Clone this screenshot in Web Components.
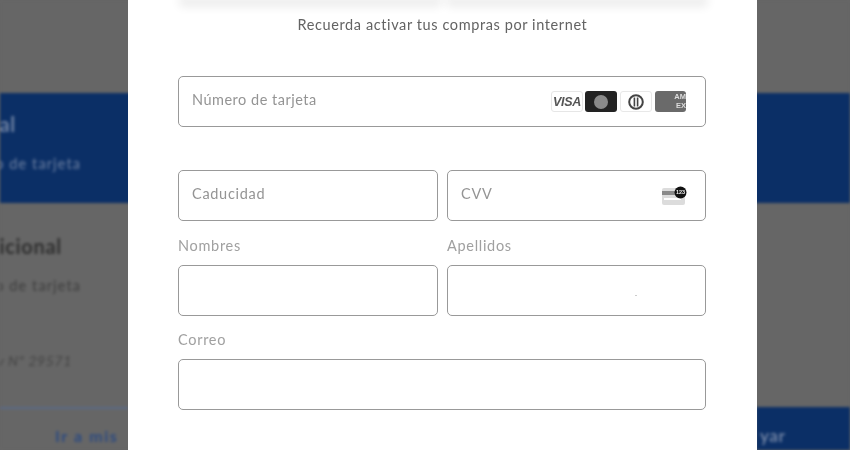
<!DOCTYPE html>
<html lang="es"><head><meta charset="utf-8"><title>Pago</title>
<style>
html,body{margin:0;height:100%;overflow:hidden;background:#666;font-family:"Lato","Open Sans",sans-serif}
</style></head><body>
<x-backdrop></x-backdrop>
<x-modal>
  <x-field placeholder="Número de tarjeta" class="full" tight><x-card-brands></x-card-brands></x-field>
  <x-field placeholder="Caducidad" class="gap"></x-field>
  <x-field placeholder="CVV" class="gap"><x-cvv-icon></x-cvv-icon></x-field>
  <x-field label="Nombres"></x-field>
  <x-field label="Apellidos" speck></x-field>
  <x-field label="Correo" class="full"></x-field>
</x-modal>
<script>
function def(name, html){
  customElements.define(name, class extends HTMLElement{
    connectedCallback(){
      if(this.shadowRoot) return;
      const r=this.attachShadow({mode:'open'});
      r.innerHTML=typeof html==='function'?html(this):html;
    }
  });
}
def('x-backdrop',`<style>
:host{display:flex;flex-direction:column;position:absolute;inset:0;background:#666;filter:blur(1.4px);overflow:hidden;font-family:"Lato",sans-serif}
.gap{height:93px;flex:none}
.band{height:110px;flex:none;background:#0b2f66;color:#6f82a3;display:flex;flex-direction:column}
.clip{display:flex;justify-content:flex-end;white-space:nowrap}
.t{font-weight:700;font-size:20px;line-height:22px;letter-spacing:.7px}
.s{font-size:14.5px;line-height:18px;letter-spacing:1.1px}
.body{height:204px;flex:none;display:flex;flex-direction:column;color:#2f2f2f}
.body .s{color:#3d3d3d}
.i{font-style:italic;color:#444;font-size:14px;line-height:18px;letter-spacing:.6px}
.foot{flex:1;display:flex;justify-content:space-between}
.l{width:128px;border-top:2px solid #5a6a88;display:flex;justify-content:flex-end;color:#2c4a80;font-weight:700;font-size:16px;padding:17px 8px 0 0;box-sizing:border-box;white-space:nowrap}
.l span{width:65px;letter-spacing:1.6px}
.r{width:94px;background:#0b2f66;color:#6f82a3;font-size:17px;font-weight:700;padding:18px 0 0 4px;box-sizing:border-box;letter-spacing:.6px}
</style>
<div class="gap"></div>
<div class="band">
  <div class="clip t" style="width:16px;margin-top:20px">Principal</div>
  <div class="clip s" style="width:81px;margin-top:20px">Pago de tarjeta</div>
</div>
<div class="body">
  <div class="clip t" style="width:62px;margin-top:32px">Adicional</div>
  <div class="clip s" style="width:81px;margin-top:20px">Pago de tarjeta</div>
  <div class="clip i" style="width:72px;margin-top:57px">Ley Nº 29571</div>
</div>
<div class="foot"><div class="l"><span>Ir a mis</span></div><div class="r">yar</div></div>`);

def('x-modal',`<style>
:host{display:flex;flex-direction:column;position:absolute;top:0;bottom:0;left:128px;width:629px;background:#fff;overflow:hidden;box-sizing:border-box;filter:blur(.45px)}
.cards{display:flex;gap:14px;height:1px;margin:0 54px 0 56px;flex:none}
.cards i{flex:1;background:#f2f2f2;box-shadow:0 1px 10px 5px rgba(0,0,0,.075);border-radius:0 0 8px 8px}
p{margin:14px 0 41px;text-align:center;font-size:14.5px;line-height:20px;letter-spacing:.6px;color:#636363}
.grid{display:grid;grid-template-columns:260px 259px;column-gap:9px;margin-left:50px;width:528px}
</style>
<div class="cards"><i></i><i></i></div>
<p>Recuerda activar tus compras por internet</p>
<div class="grid"><slot></slot></div>`);

def('x-field',el=>{
  const full=el.classList.contains('full'), gap=el.classList.contains('gap');
  const label=el.getAttribute('label'), ph=el.getAttribute('placeholder');
  const top=label==='Correo'?14:15;
  return `<style>
:host{display:flex;flex-direction:column;${full?'grid-column:1/3;':''}${gap?'margin-top:43px;':''}}
.lab{font-size:14.5px;line-height:20px;height:20px;margin:${top}px 0 9px;letter-spacing:.7px;color:#a0a0a0}
.box{position:relative;height:51px;box-sizing:border-box;border:1px solid #999;border-radius:5px;display:flex;justify-content:space-between;padding:0 19px 0 13px;background:#fff}
.ph{font-size:14.5px;line-height:20px;letter-spacing:${el.hasAttribute('tight')?'.5px':'.7px'};color:#949494;margin-top:13px}
.tools{display:flex;align-items:center}
.speck{position:absolute;left:187px;top:29px;width:2px;height:1px;background:#ccc}
</style>${label?`<div class="lab">${label}</div>`:''}
<div class="box">${ph?`<span class="ph">${ph}</span>`:'<span></span>'}<span class="tools"><slot></slot></span>${el.hasAttribute('speck')?'<span class="speck"></span>':''}</div>`;
});

def('x-card-brands',`<style>
:host{display:flex;align-items:center}
.c{width:32px;height:21px;box-sizing:border-box;border-radius:3px;display:flex;align-items:center;justify-content:center;margin-left:3px}
.visa{margin-left:0;background:#fff;border:1px solid #e6e6e6;color:#555;font:italic 700 12.5px "Liberation Sans",sans-serif;letter-spacing:-.3px;}
.mc{background:#222;margin-left:2px}
.mc i{width:14px;height:14px;border-radius:50%;background:#8a8a8a}
.dc{background:#fff;border:1px solid #e8e8e8}
.amex{width:31px;background:#6a6a6a;color:#ddd;text-align:right;justify-content:flex-end}
.amex span{font:700 7.5px/8.5px "Liberation Sans",sans-serif}
svg{display:block}
</style>
<span class="c visa">VISA</span>
<span class="c mc"><i></i></span>
<span class="c dc"><svg width="20" height="16" viewBox="0 0 20 16"><circle cx="10" cy="8" r="6.8" fill="none" stroke="#444" stroke-width="2"/><path d="M8.4 3.4v9.2M11.6 3.4v9.2" stroke="#444" stroke-width="1.6"/></svg></span>
<span class="c amex"><span>AM<br>EX</span></span>`);

def('x-cvv-icon',`<style>:host{display:flex;margin:0 -1px 0 0}svg{display:block}</style>
<svg width="25" height="20" viewBox="0 0 25 20">
<rect x="0" y="2" width="23" height="17" rx="2" fill="#dcdcdc"/>
<rect x="0" y="5" width="23" height="4" fill="#8a8a8a"/>
<rect x="2" y="12" width="17" height="2" fill="#fff"/>
<circle cx="18.5" cy="6.5" r="6" fill="#111"/>
<text x="18.5" y="8.4" text-anchor="middle" font-size="5.5" font-weight="700" font-family="Liberation Sans" fill="#eee">123</text>
</svg>`);
</script>
</body></html>
